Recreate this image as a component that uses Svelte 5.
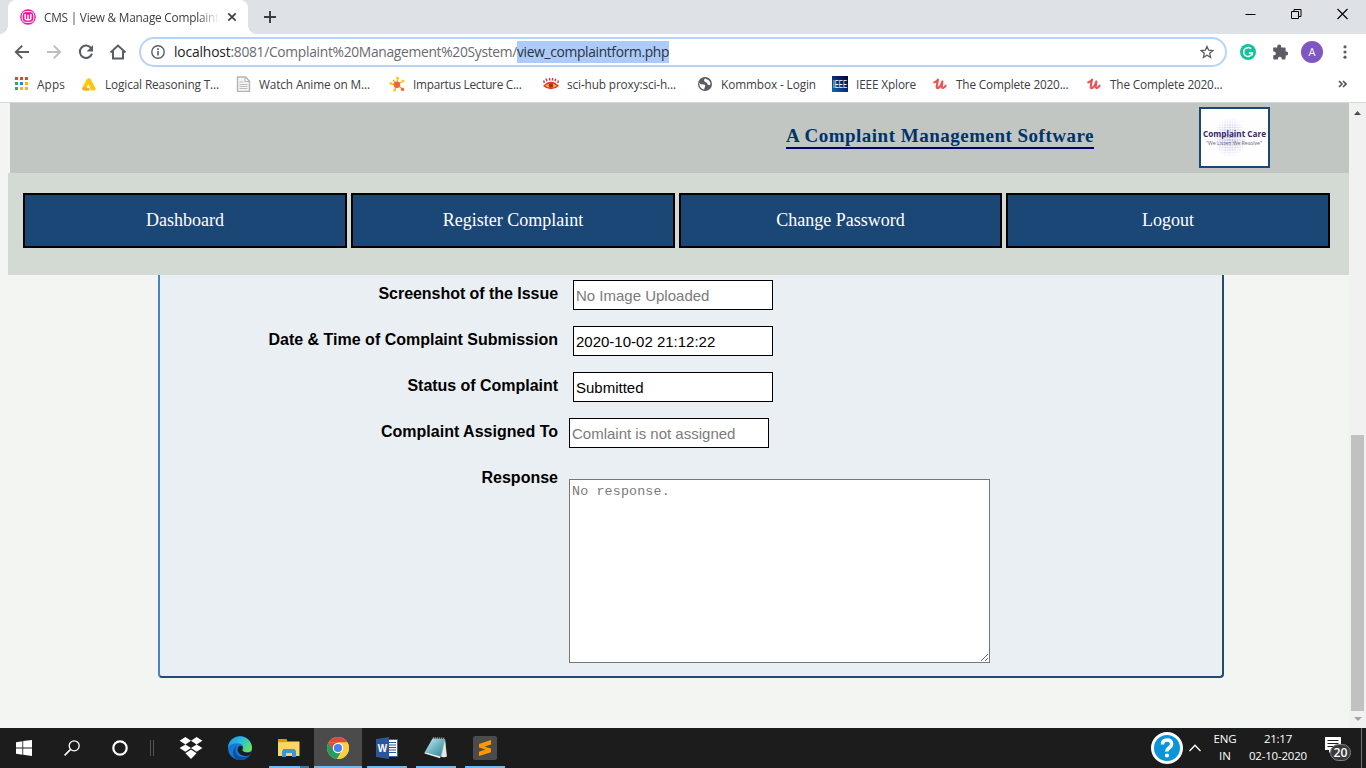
<script>
  // Spreads the letters of a label so that it fills the given width.
  function fit(node, width) {
    node.style.letterSpacing = '0px';
    const natural = node.getBoundingClientRect().width;
    const spacing = (width - natural) / node.textContent.length;
    node.style.letterSpacing = spacing.toFixed(3) + 'px';
  }

  const bookmarks = [
    { icon: 'apps', text: 'Apps', slot: 68, width: 28 },
    { icon: 'drive', text: 'Logical Reasoning T...', slot: 154, width: 114 },
    { icon: 'page', text: 'Watch Anime on M...', slot: 154, width: 111 },
    { icon: 'impartus', text: 'Impartus Lecture C...', slot: 154, width: 108.5 },
    { icon: 'eye', text: 'sci-hub proxy:sci-h...', slot: 154, width: 109 },
    { icon: 'globe', text: 'Kommbox - Login', slot: 135, width: 95 },
    { icon: 'ieee', text: 'IEEE Xplore', slot: 100, width: 60 },
    { icon: 'udemy', text: 'The Complete 2020...', slot: 154, width: 112.5 },
    { icon: 'udemy', text: 'The Complete 2020...', slot: 154, width: 112.5 }
  ];
  const menu = ['Dashboard', 'Register Complaint', 'Change Password', 'Logout'];
  const fields = [
    { label: 'Screenshot of the Issue', width: 179.5, hint: 'No Image Uploaded', value: '' },
    { label: 'Date & Time of Complaint Submission', width: 289.5, hint: '', value: '2020-10-02 21:12:22' },
    { label: 'Status of Complaint', width: 150.5, hint: '', value: 'Submitted' },
    { label: 'Complaint Assigned To', width: 177, hint: 'Comlaint is not assigned', value: '', near: true }
  ];
  const dots = [];
  for (let y = 0; y < 15; y++)
    for (let x = 0; x < 13; x++) {
      const d = Math.hypot((x - 6) / 7, (y - 7) / 8);
      if (d < 1) dots.push({ x: 16 + x * 2.5, y: 13 + y * 2.5, o: (1 - d) * 0.5 });
    }
</script>

<div class="screen">
  <div class="tabstrip">
    <div class="tab">
      <svg width="16" height="16" viewBox="0 0 16 16"><circle cx="8" cy="8" r="7.8" fill="#f7149b" /><rect x="2.2" y="2.6" width="11.6" height="10.8" rx="3.5" fill="none" stroke="#fff" stroke-width="1" /><path d="M5.2 5v4.400q0 1.400 1.400 1.400T8 9.400V5.800M8 9.400q0 1.400 1.400 1.400t1.400-1.400V5" fill="none" stroke="#fff" stroke-width="1.5" /></svg>
      <div class="tabtitle"><span use:fit={175}>CMS | View &amp; Manage Complaint</span></div>
      <svg width="10" height="10" viewBox="0 0 10 10"><path d="M1.3 1.3l7.4 7.4M8.7 1.3L1.3 8.7" stroke="#3c4043" stroke-width="1.7" /></svg>
    </div>
    <svg class="newtab" width="14" height="14" viewBox="0 0 14 14"><path d="M7 1v12M1 7h12" stroke="#3a3d41" stroke-width="1.9" /></svg>
    <div class="wincontrols">
      <svg width="11" height="12" viewBox="0 0 11 12"><path d="M.5 6.5h10" stroke="#000" /></svg>
      <svg width="11" height="12" viewBox="0 0 11 12"><path d="M.5 3.5h7v7h-7zM3 3.5v-2h7v7H8" fill="none" stroke="#000" /></svg>
      <svg width="11" height="12" viewBox="0 0 11 12"><path d="M.5 1l10 10M10.5 1l-10 10" stroke="#000" stroke-width="1.1" /></svg>
    </div>
  </div>

  <div class="toolbar">
    <svg width="16" height="16" viewBox="0 0 16 16"><path d="M15 8H2M8.2 1.6L1.8 8l6.4 6.4" fill="none" stroke="#5a5e63" stroke-width="1.9" /></svg>
    <svg width="16" height="16" viewBox="0 0 16 16"><path d="M1 8h13M7.8 1.6L14.2 8l-6.4 6.4" fill="none" stroke="#bdbebf" stroke-width="1.9" /></svg>
    <svg width="16" height="16" viewBox="0 0 16 16"><path d="M13.2 4.2A6.2 6.2 0 1 0 14 9.6" fill="none" stroke="#5a5e63" stroke-width="2" /><path d="M15 1v6.4H8.6z" fill="#5a5e63" /></svg>
    <svg width="18" height="16" viewBox="0 0 18 16"><path d="M1.5 8.6L9 1.6l7.5 7M4 7v7.6h10V7" fill="none" stroke="#5a5e63" stroke-width="2" /></svg>
    <div class="omnibox">
      <svg width="14" height="14" viewBox="0 0 14 14"><circle cx="7" cy="7" r="6.2" fill="none" stroke="#5a5e63" stroke-width="1.4" /><path d="M7 6v4.5M7 3.2v1.7" stroke="#5a5e63" stroke-width="1.6" /></svg>
      <div class="url"><span class="host" use:fit={56.5}>localhost</span><span use:fit={286.5}>:8081/Complaint%20Management%20System/</span><span class="selected" use:fit={152}>view_complaintform.php</span></div>
      <svg class="star" width="14" height="14" viewBox="0 0 14 14"><path d="M7 1.4l1.7 3.8 4.1.4-3.1 2.7.9 4.1L7 10.3l-3.6 2.1.9-4.1L1.2 5.6l4.1-.4z" fill="none" stroke="#5a5e63" stroke-width="1.3" /></svg>
    </div>
    <svg class="gram" width="16" height="16" viewBox="0 0 16 16"><circle cx="8" cy="8" r="8" fill="#15c39a" /><path d="M11 4.8A4.4 4.4 0 1 0 12.3 9H8.8M12.3 8.5v3" fill="none" stroke="#fff" stroke-width="1.5" /></svg>
    <svg class="puzzle" width="16" height="16" viewBox="0 0 16 16"><path d="M1.2 3.4h4v-.8a2 2 0 0 1 4 0v.8h3.200q1.200 0 1.200 1.200v3h.7a1.900 1.900 0 0 1 0 3.800h-.7v2.800q0 1.200-1.200 1.200H9.700v-.8a1.900 1.900 0 0 0-3.800 0v.8h-3.500q-1.200 0-1.200-1.200v-2.900h.7a1.900 1.900 0 0 0 0-3.800h-.7z" fill="#5a5e63" /></svg>
    <div class="avatar">A</div>
    <svg class="kebab" width="4" height="14" viewBox="0 0 4 14" fill="#5a5e63"><circle cx="2" cy="1.8" r="1.6" /><circle cx="2" cy="7" r="1.6" /><circle cx="2" cy="12.2" r="1.6" /></svg>
  </div>

  <div class="bookmarks">
    {#each bookmarks as b}
      <div class="bookmark" style:width="{b.slot}px">
        <svg width="16" height="16" viewBox="0 0 16 16">
          {#if b.icon === 'apps'}
            <path d="M2 1h3v3H2zM7 1h3v3H7zM12 1h3v3h-3z" fill="#ea4335" /><path d="M2 6h3v3H2zM2 11h3v3H2z" fill="#34a853" /><path d="M7 6h3v3H7z" fill="#1a84f0" /><path d="M12 6h3v3h-3zM7 11h3v3H7zM12 11h3v3h-3z" fill="#fbb404" />
          {:else if b.icon === 'drive'}
            <path d="M5.200 4.200Q7 1.300 9.300 2.600L14.500 12q.8 2.400-1.500 2.600h-2.500q-1-.4-1.600-2L7.600 9z" fill="#fcc510" /><path d="M5.600 3.700L1.400 11.500q-.8 2.500 1.600 2.900h5.500L7.600 12H5.200L9 7z" fill="#fdcb0c" /><path d="M1.300 12q-.2 2.400 1.700 2.400h6l-1.500-3.200H2z" fill="#f7a928" /><path d="M7.500 8.300l1.700 3.500H5.800z" fill="#fff" />
          {:else if b.icon === 'page'}
            <path d="M2.5 1h8l4 4v10.500h-12z" fill="#f4f4f4" stroke="#b4b4b4" stroke-width="1.4" /><path d="M10 1v4.500h4.500" fill="none" stroke="#b4b4b4" /><path d="M4.500 6h4M4.500 8.500h8M4.500 10.500h8M4.500 12.500h8" stroke="#bdbdbd" />
          {:else if b.icon === 'impartus'}
            <path d="M8 8.500L8.500 2M8 8.500l5.500-3M8 8.500l6 5M8 8.500L5.500 14M8 8.500L2 8M8 8.500L4 4" stroke="#f7a13a" stroke-width="1.3" /><circle cx="8" cy="8.700" r="3.200" fill="#f1672b" /><g fill="#fbcd27"><circle cx="8.600" cy="2" r="1.600" /><circle cx="14" cy="5" r="1.600" /><circle cx="5.500" cy="14" r="1.600" /><circle cx="2" cy="7.500" r="1.600" /></g><circle cx="13.600" cy="13.400" r="1.700" fill="#f1672b" />
          {:else if b.icon === 'eye'}
            <path d="M0 10Q8 1.500 16 10 8 16.500 0 10z" fill="#d7352b" /><path d="M2 9.800q6-5 12 0-6 4-12 0z" fill="#f7bd28" /><circle cx="8" cy="9.500" r="2.300" fill="#b8271f" /><path d="M1.400 7L.6 4.500M4 5.200L3 2.500M6.800 4.500L6.500 2M9.300 4.500l.4-2.500M12 5.300l.8-2.600M14.700 7l.8-2.500" stroke="#d7352b" stroke-width="1.4" />
          {:else if b.icon === 'globe'}
            <circle cx="8" cy="8" r="7" fill="#5a5e63" /><path d="M2.200 7q2 1.600 4.300 1.600t1.500 2.200L7 13.500q-4.600-.6-4.800-6.500zM8 2.600Q6.300 4 7.300 5.200t2.700 1.600l.4 1.600 2.600.8q1-3-1.200-5z" fill="#fff" />
          {:else if b.icon === 'ieee'}
            <defs><linearGradient id="ie" x1="0" y1="1" x2="1" y2="0"><stop offset="0" stop-color="#0871b3" /><stop offset=".5" stop-color="#062f78" /><stop offset="1" stop-color="#02022c" /></linearGradient></defs>
            <rect width="16" height="16" fill="url(#ie)" /><text x="1" y="12" textLength="14" lengthAdjust="spacingAndGlyphs" font-size="10.500" font-family="Liberation Sans" fill="#fff">IEEE</text>
          {:else}
            <path d="M2.200 6.500Q4.500 5.800 6 3.700L4.700 10.400Q4.500 12.600 6.200 12 8.800 10.700 10.400 5.400L9.800 10.400q0 2 1.500 1.500 1.500-.6 2.300-2.300" fill="none" stroke="#ec5252" stroke-width="2.100" stroke-linecap="round" stroke-linejoin="round" />
          {/if}
        </svg>
        <span use:fit={b.width}>{b.text}</span>
      </div>
    {/each}
    <svg class="more" width="9" height="8" viewBox="0 0 9 8"><path d="M1 1l3 3-3 3M5 1l3 3-3 3" fill="none" stroke="#4f5357" stroke-width="1.6" /></svg>
  </div>

  <div class="viewport">
    <div class="page">
      <header>
        <h1><span use:fit={308}>A Complaint Management Software</span></h1>
        <svg class="logo" width="71" height="61" viewBox="0 0 71 61">
          <rect x="1" y="1" width="69" height="59" fill="#fffeff" stroke="#1b4777" stroke-width="2" />
          {#each dots as d}<circle cx={d.x} cy={d.y} r="1.100" fill="#5964bd" opacity={d.o} />{/each}
          <text x="4" y="30" textLength="63" lengthAdjust="spacingAndGlyphs" font-family="Open Sans" font-weight="bold" font-size="8" fill="#3a2766">Complaint Care</text>
          <text x="7" y="38" textLength="56" lengthAdjust="spacingAndGlyphs" font-family="Open Sans" font-size="5.400" fill="#66617c">"We Listen We Resolve"</text>
        </svg>
      </header>
      <nav>
        {#each menu as item}<div class="item">{item}</div>{/each}
      </nav>
      <main>
        {#each fields as f}
          <div class="row">
            <label for={f.label}><span use:fit={f.width}>{f.label}</span></label>
            <input id={f.label} class:near={f.near} placeholder={f.hint} value={f.value} readonly />
          </div>
        {/each}
        <div class="row tall">
          <label for="response"><span use:fit={76.5}>Response</span></label>
          <textarea id="response" placeholder="No response." readonly></textarea>
        </div>
      </main>
    </div>
    <div class="scrollbar">
      <svg width="7" height="4" viewBox="0 0 7 4"><path d="M0 4l3.500-4L7 4z" fill="#505050" /></svg>
      <div class="thumb"></div>
      <svg width="8" height="4" viewBox="0 0 8 4"><path d="M0 0h8L4 4z" fill="#a3a3a3" /></svg>
    </div>
  </div>

  <div class="taskbar">
    <div class="slot"><svg width="16" height="16" viewBox="0 0 16 16"><path d="M0 2.200L6.400 1.300v6.300H0zM7.200 1.100L16 0v7.600H7.200zM0 8.400h6.400v6.300L0 13.800zM7.200 8.400H16V16l-8.800-1.200z" fill="#fff" /></svg></div>
    <div class="slot"><svg width="16" height="16" viewBox="0 0 16 16"><circle cx="10.200" cy="5.800" r="5" fill="none" stroke="#fff" stroke-width="1.300" /><path d="M6.600 9.400L.6 15.400" stroke="#fff" stroke-width="1.500" /></svg></div>
    <div class="slot"><svg width="16" height="16" viewBox="0 0 16 16"><circle cx="8" cy="8" r="6.700" fill="none" stroke="#fff" stroke-width="2.200" /></svg></div>
    <div class="divider"></div>
    <div class="apps">
      <div class="slot"><svg width="24" height="22" viewBox="0 0 24 22"><path d="M6.400 0L12 3.700 6.400 7.400.6 3.700zM17.600 0l5.800 3.700-5.800 3.700L12 3.700zM.6 11.100l5.800-3.700L12 11.100l-5.600 3.700zM17.600 7.400l5.800 3.700-5.800 3.700-5.600-3.700zM6.400 16.200l5.600-3.700 5.600 3.700L12 22z" fill="#fff" /></svg></div>
      <div class="slot"><svg width="24" height="24" viewBox="0 0 24 24">
        <defs><linearGradient id="et" x1="0" y1=".3" x2="1" y2=".7"><stop offset="0" stop-color="#1f9ddf" /><stop offset=".5" stop-color="#2ebfd8" /><stop offset="1" stop-color="#6ce64e" /></linearGradient></defs>
        <circle cx="12" cy="12" r="12" fill="#1478d4" /><path d="M.1 11A12 12 0 0 1 24 12q-.1 4.300-4.400 4.400-4.800 0-5.400-2.400 1-.8 1-2.800-.8-4-6.200-4Q2.600 7.200.1 11z" fill="url(#et)" /><path d="M8.500 9.200Q5 18 12.500 20.800 18 22 22 19 16 27.500 7.500 23 2 17 8.500 9.200z" fill="#0b4fa4" /><path d="M14.200 14q.6 2.500 5.400 2.400 2.200 0 3.700-1.200-.5 2-1.800 3.800-5 2-9-.5-5-3.400-1.500-8.300 2-1.200 3.800.7 0 2-.6 3.100z" fill="#1c1c1c" />
      </svg></div>
      <div class="slot run split"><svg width="22" height="18" viewBox="0 0 22 18"><path d="M0 1h9v1.500h12.500V17H0z" fill="#fbd667" /><path d="M0 0h8.500l1 2.300L8 3.300H0z" fill="#dd9c10" /><path d="M4 18v-6L5.500 10h11l1.500 2v6h-4v-4H8v4z" fill="#3b96d8" /></svg></div>
      <div class="slot run active"><svg width="22" height="22" viewBox="0 0 22 22"><circle cx="11" cy="11" r="11" fill="#fbc82c" /><path d="M1.500 5.500A11 11 0 0 1 20.500 5.500H11z" fill="#db4a3e" /><path d="M1.500 5.500A11 11 0 0 0 10 22l5-8.500-4-2.500-4.500 2.200z" fill="#1fa060" /><path d="M1.500 5.500L6.200 13.500 11 11V5.500z" fill="#db4a3e" /><path d="M20.500 5.500H11v5.500l4 2.500L10 22A11 11 0 0 0 20.500 5.500z" fill="#fbcd42" /><circle cx="11" cy="11" r="5.200" fill="#fff" /><circle cx="11" cy="11" r="4.100" fill="#4384f3" /></svg></div>
      <div class="slot run"><svg width="22" height="22" viewBox="0 0 22 22"><rect x="11" y="2.500" width="10.500" height="17" fill="#fff" stroke="#2b579a" stroke-width=".8" /><path d="M13 5.500h7M13 8h7M13 10.500h7M13 13h7M13 15.500h7" stroke="#2b579a" stroke-width="1.100" /><path d="M0 2L13 0v22L0 20z" fill="#2b579a" /><text x="1.800" y="15" textLength="9.400" lengthAdjust="spacingAndGlyphs" font-family="Liberation Sans" font-weight="bold" font-size="11" fill="#fff">W</text></svg></div>
      <div class="slot run"><svg width="24" height="22" viewBox="0 0 24 22">
        <defs><linearGradient id="np" x1="0" y1="0" x2="1" y2="1"><stop offset="0" stop-color="#d7f0f4" /><stop offset=".5" stop-color="#6fb6c5" /><stop offset="1" stop-color="#2b8196" /></linearGradient></defs>
        <path d="M21 2l2 17-3 1.500-7-2z" fill="#b9b29b" /><path d="M8.500 1.500L21 2l-4.500 17.500L.8 15z" fill="url(#np)" /><path d="M.8 15l15.700 4.500-.4 1.700L.5 16.500z" fill="#e8f0f0" /><path d="M9 1l12 .6" stroke="#8e9ca0" stroke-width="1.800" stroke-dasharray="1.200 .8" /><path d="M21 3l1.500 17h-5z" fill="#dcecee" />
      </svg></div>
      <div class="slot run"><svg width="24" height="24" viewBox="0 0 24 24"><rect width="24" height="24" rx="2" fill="#4b4b4b" /><path d="M6 8l12-4v4.500l-6.500 2.200L18 12.600v3.600L6 20v-4.300l6.500-2.100L6 11.500z" fill="#ff9800" /></svg></div>
    </div>
    <div class="tray">
      <svg width="32" height="32" viewBox="0 0 32 32"><circle cx="16" cy="16" r="14.500" fill="#0b94d8" stroke="#fff" stroke-width="3" /><path d="M11.500 12.600Q11.500 8 16 8t4.600 4q0 2.200-2.400 3.800T16 19.500" fill="none" stroke="#fff" stroke-width="3.500" /><circle cx="16" cy="23.500" r="2.100" fill="#fff" /></svg>
      <svg class="up" width="12" height="8" viewBox="0 0 12 8"><path d="M.5 7L6 1.300 11.500 7" fill="none" stroke="#fff" stroke-width="1.300" /></svg>
      <div class="lang"><span use:fit={23}>ENG</span><span use:fit={12}>IN</span></div>
      <div class="clock"><span use:fit={28}>21:17</span><span use:fit={58}>02-10-2020</span></div>
      <svg class="note" width="26" height="26" viewBox="0 0 26 26"><path d="M0 0h16v13H7l-3 3v-3H0z" fill="#fff" /><path d="M2.500 3.500h11M2.500 6.500h11M2.500 9.500h7" stroke="#222" /><rect x="5.500" y="7.500" width="20" height="16" rx="8" fill="#3a3a3a" stroke="#858585" /><text x="8.500" y="19.500" textLength="14" lengthAdjust="spacingAndGlyphs" font-family="Open Sans" font-weight="600" font-size="12" fill="#fff">20</text></svg>
      <div class="peek"></div>
    </div>
  </div>
</div>

<style>
  :global(body) { margin: 0; overflow: hidden; }
  * { box-sizing: border-box; }
  svg { display: block; flex: none; }
  .screen { width: 1366px; height: 768px; display: flex; flex-direction: column; overflow: hidden; background: #fff; font-family: "Open Sans", sans-serif; font-size: 12px; color: #3c4043; white-space: nowrap; }

  .tabstrip { height: 34px; background: #dee1e6; display: flex; align-items: center; padding-left: 8px; }
  .tab { position: relative; width: 240px; height: 34px; background: #fff; border-radius: 8px 8px 0 0; display: flex; align-items: center; padding-left: 12px; }
  .tab::before, .tab::after { content: ""; position: absolute; bottom: 0; width: 8px; height: 8px; }
  .tab::before { left: -8px; background: radial-gradient(circle at 0 0, transparent 7.5px, #fff 8px); }
  .tab::after { right: -8px; background: radial-gradient(circle at 100% 0, transparent 7.5px, #fff 8px); }
  .tabtitle { width: 175px; margin: 0 8px; overflow: hidden; font-size: 11.8px; -webkit-mask-image: linear-gradient(90deg, #000 88%, transparent); mask-image: linear-gradient(90deg, #000 88%, transparent); }
  .newtab { margin-left: 15px; }
  .wincontrols { margin-left: auto; margin-right: 18px; margin-bottom: 6px; display: flex; gap: 35px; }

  .toolbar { height: 36px; display: flex; align-items: center; padding-left: 14px; gap: 16px; }
  .omnibox { width: 1088px; height: 30px; margin-left: -3px; border: 2px solid #b7d3f9; border-radius: 15px; display: flex; align-items: center; padding: 0 10px; }
  .toolbar > svg:nth-child(4) { margin-left: -1px; margin-right: -1px; }
  .url { margin-left: 9px; display: flex; align-items: center; font-size: 13.8px; line-height: 22px; color: #676b70; }
  .host { color: #202124; }
  .selected { background: #accbfa; color: #2b3340; }
  .star { margin-left: auto; margin-right: 1px; }
  .gram { margin-left: -3px; }
  .avatar { width: 22px; height: 22px; margin-left: -3px; border-radius: 50%; background: #7e57c2; color: #fff; font-size: 11px; line-height: 22px; text-align: center; }
  .kebab { margin-left: 4px; }

  .bookmarks { height: 33px; border-bottom: 1px solid #d5d8dd; display: flex; align-items: center; padding: 0 19px 4px 13px; }
  .bookmark { display: flex; align-items: center; gap: 8px; font-size: 11.8px; }
  .bookmark span { margin-top: -1px; }
  .more { margin-left: auto; }

  .viewport { height: 625px; display: flex; background: #f3f5f2; }
  .page { width: 1349px; display: flex; flex-direction: column; padding-left: 8px; }
  header { height: 70px; margin-left: 2px; background: #c1c6c2; display: flex; align-items: flex-start; padding-left: 776px; }
  h1 { width: 308px; height: 24px; margin: 22px 0 0; border-bottom: 2px solid #00006d; font: bold 19px/21px "Liberation Serif", serif; color: #00336a; }
  .logo { margin: 4px 0 0 105px; }
  nav { height: 102px; background: #d3dad3; display: grid; grid-template-columns: 324px 324px 323px 324px; column-gap: 4px; padding: 20px 19px 27px 15px; }
  .item { background: #1b4777; border: 2px solid #000; color: #fff; font: 18px/51px "Liberation Serif", serif; text-align: center; }
  main { width: 1066px; height: 403px; margin-left: 150px; background: #eaeff3; border: solid; border-width: 0 2px 2px; border-color: #264a70 #264a70 #264a70 #4583c4; border-radius: 0 0 4px 4px; padding-top: 5px; font-family: "Liberation Sans", sans-serif; color: #000; }
  .row { height: 46px; display: flex; align-items: flex-start; }
  label { width: 398px; padding-top: 4px; text-align: right; font: bold 16px/20px "Liberation Sans", sans-serif; }
  input { width: 200px; height: 30px; margin-left: 15px; padding: 0 2px; border: 1px solid #000; background: #fff; color: #000; font: 15px "Liberation Sans", sans-serif; outline: none; }
  input.near { margin-left: 11px; }
  input::placeholder, textarea::placeholder { color: #7b7b7b; opacity: 1; }
  textarea { width: 421px; height: 184px; margin: 15px 0 0 11px; padding: 4px 2px 2px; border: 1px solid #767676; border-radius: 0; background: #fff; font: 13.333px "Liberation Mono", monospace; letter-spacing: 0.15px; outline: none; resize: both; }
  .scrollbar { width: 17px; background: #f1f1f1; display: flex; flex-direction: column; align-items: center; padding-top: 8px; }
  .thumb { width: 13px; height: 276px; margin: 320px 0 6px; background: #c1c1c1; }

  .taskbar { height: 40px; background: #1c1c1c; display: flex; align-items: center; color: #fff; }
  .slot { position: relative; width: 48px; height: 40px; display: flex; align-items: center; justify-content: center; }
  .divider { width: 4px; height: 16px; margin-left: 6px; border: solid #555; border-width: 0 1px; }
  .apps { display: flex; gap: 1px; margin-left: 13px; }
  .active { background: #4b4b4b; }
  .run::after { content: ""; position: absolute; bottom: 0; left: 4px; width: 40px; height: 2px; background: #76b9ed; }
  .active::after { left: 0; width: 48px; }
  .split::after { background: linear-gradient(90deg, #76b9ed 31px, #4b7696 31px); }
  .tray { height: 40px; margin-left: auto; display: flex; align-items: center; }
  .up { margin-left: 6px; }
  .lang, .clock { display: flex; flex-direction: column; align-items: center; font-size: 11.5px; line-height: 17px; margin-top: -2px; }
  .lang { width: 24px; margin-left: 12px; }
  .clock { width: 60px; margin-left: 11px; }
  .note { margin: 4px 0 0 17px; }
  .peek { width: 5px; height: 40px; margin-left: 10px; border-left: 1px solid #737373; }
</style>
